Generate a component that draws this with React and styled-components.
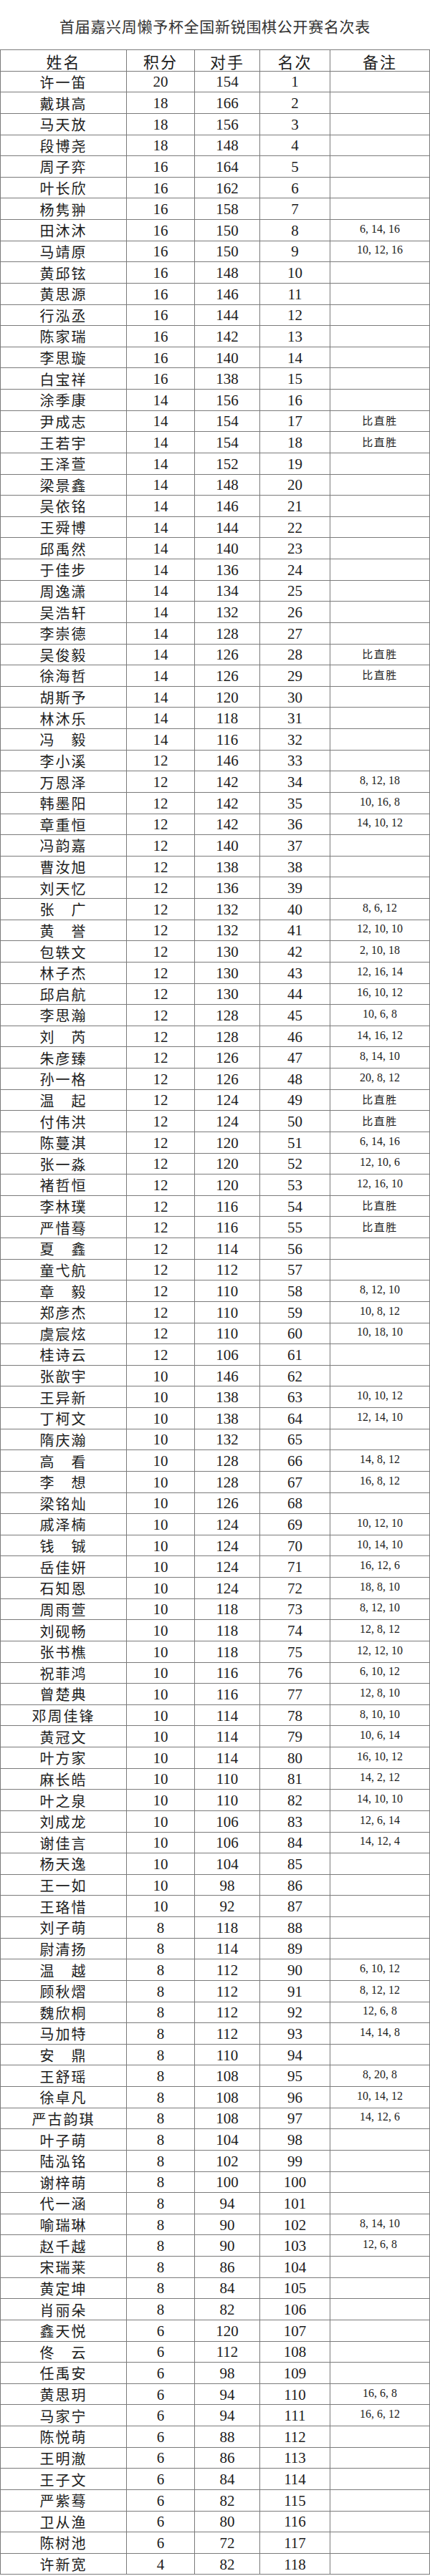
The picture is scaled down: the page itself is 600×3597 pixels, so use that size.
import React from "react";
import styled, { createGlobalStyle } from "styled-components";

const GlobalStyle = createGlobalStyle`
  html, body {
    margin: 0;
    padding: 0;
    background: #fff;
  }
  body {
    font-family: "Liberation Serif", "Noto Sans CJK SC", serif;
    color: #1c1c1c;
  }
`;

const rows = [
  ["许一笛", 20, 154, 1],
  ["戴琪高", 18, 166, 2],
  ["马天放", 18, 156, 3],
  ["段博尧", 18, 148, 4],
  ["周子弈", 16, 164, 5],
  ["叶长欣", 16, 162, 6],
  ["杨隽翀", 16, 158, 7],
  ["田沐沐", 16, 150, 8, "6, 14, 16"],
  ["马靖原", 16, 150, 9, "10, 12, 16"],
  ["黄邱铉", 16, 148, 10],
  ["黄思源", 16, 146, 11],
  ["行泓丞", 16, 144, 12],
  ["陈家瑞", 16, 142, 13],
  ["李思璇", 16, 140, 14],
  ["白宝祥", 16, 138, 15],
  ["涂季康", 14, 156, 16],
  ["尹成志", 14, 154, 17, "比直胜"],
  ["王若宇", 14, 154, 18, "比直胜"],
  ["王泽萱", 14, 152, 19],
  ["梁景鑫", 14, 148, 20],
  ["吴依铭", 14, 146, 21],
  ["王舜博", 14, 144, 22],
  ["邱禹然", 14, 140, 23],
  ["于佳步", 14, 136, 24],
  ["周逸潇", 14, 134, 25],
  ["吴浩轩", 14, 132, 26],
  ["李崇德", 14, 128, 27],
  ["吴俊毅", 14, 126, 28, "比直胜"],
  ["徐海哲", 14, 126, 29, "比直胜"],
  ["胡斯予", 14, 120, 30],
  ["林沐乐", 14, 118, 31],
  ["冯　毅", 14, 116, 32],
  ["李小溪", 12, 146, 33],
  ["万恩泽", 12, 142, 34, "8, 12, 18"],
  ["韩墨阳", 12, 142, 35, "10, 16, 8"],
  ["章重恒", 12, 142, 36, "14, 10, 12"],
  ["冯韵嘉", 12, 140, 37],
  ["曹汝旭", 12, 138, 38],
  ["刘天忆", 12, 136, 39],
  ["张　广", 12, 132, 40, "8, 6, 12"],
  ["黄　誉", 12, 132, 41, "12, 10, 10"],
  ["包轶文", 12, 130, 42, "2, 10, 18"],
  ["林子杰", 12, 130, 43, "12, 16, 14"],
  ["邱启航", 12, 130, 44, "16, 10, 12"],
  ["李思瀚", 12, 128, 45, "10, 6, 8"],
  ["刘　芮", 12, 128, 46, "14, 16, 12"],
  ["朱彦臻", 12, 126, 47, "8, 14, 10"],
  ["孙一格", 12, 126, 48, "20, 8, 12"],
  ["温　起", 12, 124, 49, "比直胜"],
  ["付伟洪", 12, 124, 50, "比直胜"],
  ["陈蔓淇", 12, 120, 51, "6, 14, 16"],
  ["张一淼", 12, 120, 52, "12, 10, 6"],
  ["褚哲恒", 12, 120, 53, "12, 16, 10"],
  ["李林璞", 12, 116, 54, "比直胜"],
  ["严惜蓦", 12, 116, 55, "比直胜"],
  ["夏　鑫", 12, 114, 56],
  ["童弋航", 12, 112, 57],
  ["章　毅", 12, 110, 58, "8, 12, 10"],
  ["郑彦杰", 12, 110, 59, "10, 8, 12"],
  ["虞宸炫", 12, 110, 60, "10, 18, 10"],
  ["桂诗云", 12, 106, 61],
  ["张歆宇", 10, 146, 62],
  ["王异新", 10, 138, 63, "10, 10, 12"],
  ["丁柯文", 10, 138, 64, "12, 14, 10"],
  ["隋庆瀚", 10, 132, 65],
  ["高　看", 10, 128, 66, "14, 8, 12"],
  ["李　想", 10, 128, 67, "16, 8, 12"],
  ["梁铭灿", 10, 126, 68],
  ["戚泽楠", 10, 124, 69, "10, 12, 10"],
  ["钱　铖", 10, 124, 70, "10, 14, 10"],
  ["岳佳妍", 10, 124, 71, "16, 12, 6"],
  ["石知恩", 10, 124, 72, "18, 8, 10"],
  ["周雨萱", 10, 118, 73, "8, 12, 10"],
  ["刘砚畅", 10, 118, 74, "12, 8, 12"],
  ["张书樵", 10, 118, 75, "12, 12, 10"],
  ["祝菲鸿", 10, 116, 76, "6, 10, 12"],
  ["曾楚典", 10, 116, 77, "12, 8, 10"],
  ["邓周佳锋", 10, 114, 78, "8, 10, 10"],
  ["黄冠文", 10, 114, 79, "10, 6, 14"],
  ["叶方家", 10, 114, 80, "16, 10, 12"],
  ["麻长皓", 10, 110, 81, "14, 2, 12"],
  ["叶之泉", 10, 110, 82, "14, 10, 10"],
  ["刘成龙", 10, 106, 83, "12, 6, 14"],
  ["谢佳言", 10, 106, 84, "14, 12, 4"],
  ["杨天逸", 10, 104, 85],
  ["王一如", 10, 98, 86],
  ["王珞惜", 10, 92, 87],
  ["刘子萌", 8, 118, 88],
  ["尉清扬", 8, 114, 89],
  ["温　越", 8, 112, 90, "6, 10, 12"],
  ["顾秋熠", 8, 112, 91, "8, 12, 12"],
  ["魏欣桐", 8, 112, 92, "12, 6, 8"],
  ["马加特", 8, 112, 93, "14, 14, 8"],
  ["安　鼎", 8, 110, 94],
  ["王舒瑶", 8, 108, 95, "8, 20, 8"],
  ["徐卓凡", 8, 108, 96, "10, 14, 12"],
  ["严古韵琪", 8, 108, 97, "14, 12, 6"],
  ["叶子萌", 8, 104, 98],
  ["陆泓铭", 8, 102, 99],
  ["谢梓萌", 8, 100, 100],
  ["代一涵", 8, 94, 101],
  ["喻瑞琳", 8, 90, 102, "8, 14, 10"],
  ["赵千越", 8, 90, 103, "12, 6, 8"],
  ["宋瑞莱", 8, 86, 104],
  ["黄定坤", 8, 84, 105],
  ["肖丽朵", 8, 82, 106],
  ["鑫天悦", 6, 120, 107],
  ["佟　云", 6, 112, 108],
  ["任禹安", 6, 98, 109],
  ["黄思玥", 6, 94, 110, "16, 6, 8"],
  ["马家宁", 6, 94, 111, "16, 6, 12"],
  ["陈悦萌", 6, 88, 112],
  ["王明澈", 6, 86, 113],
  ["王子文", 6, 84, 114],
  ["严紫蓦", 6, 82, 115],
  ["卫从渔", 6, 80, 116],
  ["陈树池", 6, 72, 117],
  ["许新宽", 4, 82, 118],
];

const Page = styled.div`
  width: 600px;
  height: 3597px;
  display: flex;
  flex-direction: column;
`;

const Title = styled.h1`
  height: 69px;
  margin: 0;
  display: flex;
  align-items: center;
  justify-content: center;
  padding-top: 4px;
  box-sizing: border-box;
  font-family: "Noto Sans CJK SC", sans-serif;
  font-weight: 400;
  font-size: 21px;
  line-height: 1.2;
  letter-spacing: 0.7px;
  color: #333;
`;

const Table = styled.div`
  display: grid;
  grid-auto-rows: 29.64px;
  border-top: 1px solid #7a7a7a;
  border-left: 1px solid #7a7a7a;
  width: 600px;
  box-sizing: border-box;
`;

const Row = styled.div`
  display: grid;
  grid-template-columns: 176px 95px 91px 98px 1fr;
  border-bottom: 1px solid #7a7a7a;
  box-sizing: border-box;
`;

const Cell = styled.div`
  display: flex;
  align-items: center;
  justify-content: center;
  border-right: 1px solid #7a7a7a;
  white-space: nowrap;
  font-size: 21px;
  line-height: 1;
  padding-top: 2px;
  box-sizing: border-box;
`;

const Name = styled(Cell)`
  font-family: "Noto Sans CJK SC", sans-serif;
  font-size: 20px;
  letter-spacing: 2px;
`;

const HeadCell = styled(Cell)`
  font-family: "Noto Sans CJK SC", sans-serif;
  font-size: 22px;
  letter-spacing: 2px;
`;

const Note = styled(Cell)`
  font-size: ${(p) => (p.$cn ? "15px" : "16px")};
  font-family: ${(p) =>
    p.$cn ? `"Noto Sans CJK SC", sans-serif` : `"Liberation Serif", serif`};
  letter-spacing: ${(p) => (p.$cn ? "1.5px" : "0")};
  padding-top: 0;
  padding-bottom: 3px;
`;

export default function App() {
  return (
    <>
      <GlobalStyle />
      <Page>
        <Title>首届嘉兴周懒予杯全国新锐围棋公开赛名次表</Title>
        <Table>
          <Row>
            <HeadCell>姓名</HeadCell>
            <HeadCell>积分</HeadCell>
            <HeadCell>对手</HeadCell>
            <HeadCell>名次</HeadCell>
            <HeadCell>备注</HeadCell>
          </Row>
          {rows.map(([name, score, opp, rank, note]) => (
            <Row key={rank}>
              <Name>{name}</Name>
              <Cell>{score}</Cell>
              <Cell>{opp}</Cell>
              <Cell>{rank}</Cell>
              <Note $cn={note === "比直胜"}>{note || ""}</Note>
            </Row>
          ))}
        </Table>
      </Page>
    </>
  );
}
